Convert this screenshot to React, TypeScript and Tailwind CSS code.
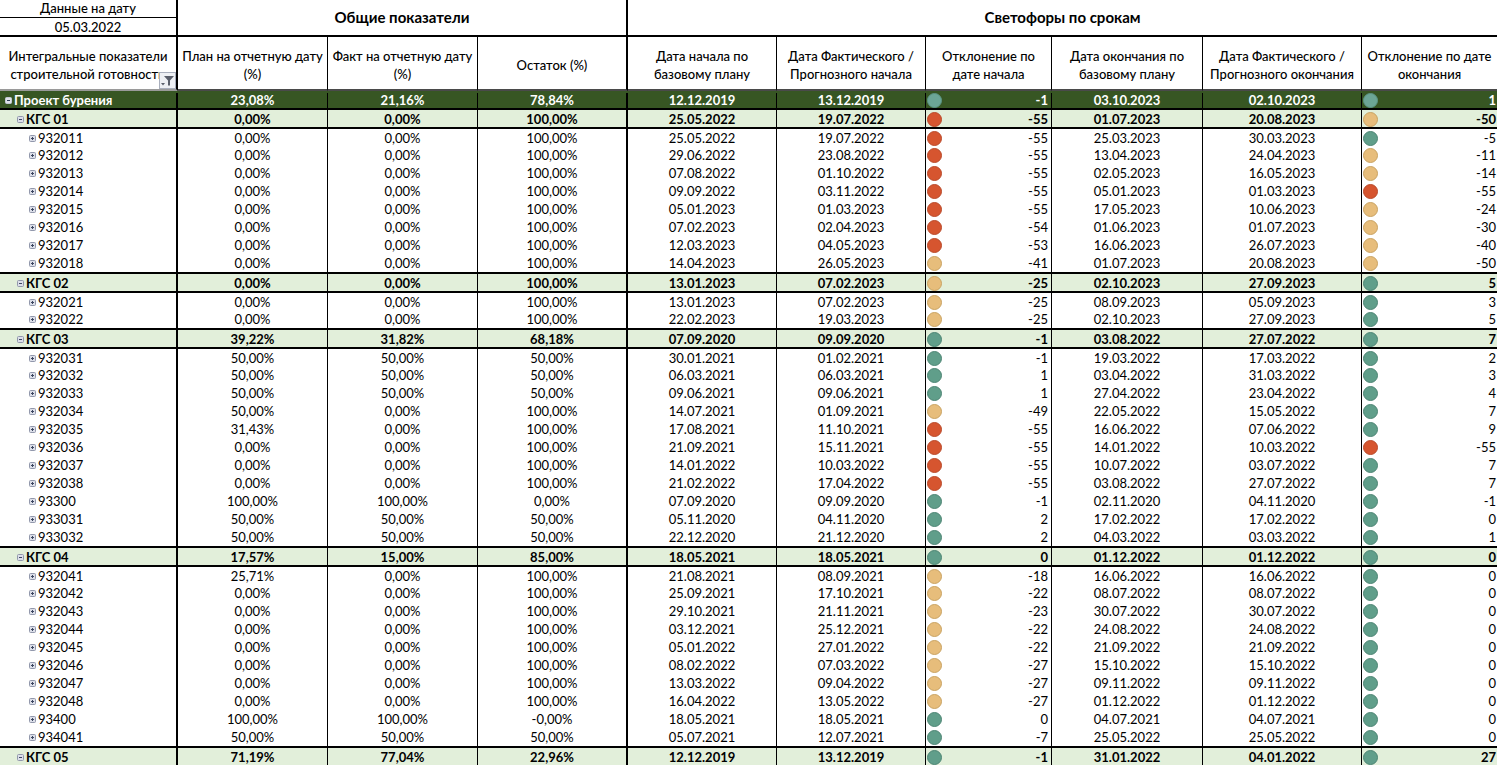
const COLS = "grid grid-cols-[178px_150px_150px_150px_149px_149px_126px_151px_159px_135px]";

const raw = `0|Проект бурения|23,08%|21,16%|78,84%|12.12.2019|13.12.2019|g-1|03.10.2023|02.10.2023|g1
1|КГС 01|0,00%|0,00%|100,00%|25.05.2022|19.07.2022|r-55|01.07.2023|20.08.2023|y-50
2|932011|0,00%|0,00%|100,00%|25.05.2022|19.07.2022|r-55|25.03.2023|30.03.2023|g-5
2|932012|0,00%|0,00%|100,00%|29.06.2022|23.08.2022|r-55|13.04.2023|24.04.2023|y-11
2|932013|0,00%|0,00%|100,00%|07.08.2022|01.10.2022|r-55|02.05.2023|16.05.2023|y-14
2|932014|0,00%|0,00%|100,00%|09.09.2022|03.11.2022|r-55|05.01.2023|01.03.2023|r-55
2|932015|0,00%|0,00%|100,00%|05.01.2023|01.03.2023|r-55|17.05.2023|10.06.2023|y-24
2|932016|0,00%|0,00%|100,00%|07.02.2023|02.04.2023|r-54|01.06.2023|01.07.2023|y-30
2|932017|0,00%|0,00%|100,00%|12.03.2023|04.05.2023|r-53|16.06.2023|26.07.2023|y-40
2|932018|0,00%|0,00%|100,00%|14.04.2023|26.05.2023|y-41|01.07.2023|20.08.2023|y-50
1|КГС 02|0,00%|0,00%|100,00%|13.01.2023|07.02.2023|y-25|02.10.2023|27.09.2023|g5
2|932021|0,00%|0,00%|100,00%|13.01.2023|07.02.2023|y-25|08.09.2023|05.09.2023|g3
2|932022|0,00%|0,00%|100,00%|22.02.2023|19.03.2023|y-25|02.10.2023|27.09.2023|g5
1|КГС 03|39,22%|31,82%|68,18%|07.09.2020|09.09.2020|g-1|03.08.2022|27.07.2022|g7
2|932031|50,00%|50,00%|50,00%|30.01.2021|01.02.2021|g-1|19.03.2022|17.03.2022|g2
2|932032|50,00%|50,00%|50,00%|06.03.2021|06.03.2021|g1|03.04.2022|31.03.2022|g3
2|932033|50,00%|50,00%|50,00%|09.06.2021|09.06.2021|g1|27.04.2022|23.04.2022|g4
2|932034|50,00%|0,00%|100,00%|14.07.2021|01.09.2021|y-49|22.05.2022|15.05.2022|g7
2|932035|31,43%|0,00%|100,00%|17.08.2021|11.10.2021|r-55|16.06.2022|07.06.2022|g9
2|932036|0,00%|0,00%|100,00%|21.09.2021|15.11.2021|r-55|14.01.2022|10.03.2022|r-55
2|932037|0,00%|0,00%|100,00%|14.01.2022|10.03.2022|r-55|10.07.2022|03.07.2022|g7
2|932038|0,00%|0,00%|100,00%|21.02.2022|17.04.2022|r-55|03.08.2022|27.07.2022|g7
2|93300|100,00%|100,00%|0,00%|07.09.2020|09.09.2020|g-1|02.11.2020|04.11.2020|g-1
2|933031|50,00%|50,00%|50,00%|05.11.2020|04.11.2020|g2|17.02.2022|17.02.2022|g0
2|933032|50,00%|50,00%|50,00%|22.12.2020|21.12.2020|g2|04.03.2022|03.03.2022|g1
1|КГС 04|17,57%|15,00%|85,00%|18.05.2021|18.05.2021|g0|01.12.2022|01.12.2022|g0
2|932041|25,71%|0,00%|100,00%|21.08.2021|08.09.2021|y-18|16.06.2022|16.06.2022|g0
2|932042|0,00%|0,00%|100,00%|25.09.2021|17.10.2021|y-22|08.07.2022|08.07.2022|g0
2|932043|0,00%|0,00%|100,00%|29.10.2021|21.11.2021|y-23|30.07.2022|30.07.2022|g0
2|932044|0,00%|0,00%|100,00%|03.12.2021|25.12.2021|y-22|24.08.2022|24.08.2022|g0
2|932045|0,00%|0,00%|100,00%|05.01.2022|27.01.2022|y-22|21.09.2022|21.09.2022|g0
2|932046|0,00%|0,00%|100,00%|08.02.2022|07.03.2022|y-27|15.10.2022|15.10.2022|g0
2|932047|0,00%|0,00%|100,00%|13.03.2022|09.04.2022|y-27|09.11.2022|09.11.2022|g0
2|932048|0,00%|0,00%|100,00%|16.04.2022|13.05.2022|y-27|01.12.2022|01.12.2022|g0
2|93400|100,00%|100,00%|-0,00%|18.05.2021|18.05.2021|g0|04.07.2021|04.07.2021|g0
2|934041|50,00%|50,00%|50,00%|05.07.2021|12.07.2021|g-7|25.05.2022|25.05.2022|g0
1|КГС 05|71,19%|77,04%|22,96%|12.12.2019|13.12.2019|g-1|31.01.2022|04.01.2022|g27`;

const rows = raw.split("\n").map((l) => l.split("|"));

const heads = [
  "Интегральные показатели строительной готовности",
  "План на отчетную дату (%)",
  "Факт на отчетную дату (%)",
  "Остаток (%)",
  "Дата начала по базовому плану",
  "Дата Фактического / Прогнозного начала",
  "Отклонение по дате начала",
  "Дата окончания по базовому плану",
  "Дата Фактического / Прогнозного окончания",
  "Отклонение по дате окончания",
];

const rightBorder = [
  "border-r-2 border-r-black",
  "border-r border-r-black",
  "border-r border-r-black",
  "border-r-2 border-r-black",
  "border-r border-r-black",
  "border-r border-r-black",
  "border-r border-r-black",
  "border-r border-r-black",
  "border-r border-r-black",
  "",
];

function Box({ open, level }: { open: boolean; level: number }) {
  const dark = level === 0;
  return (
    <svg width="7" height="7" viewBox="0 0 7 7" className="shrink-0 mr-[2px]">
      <rect x="0.5" y="0.5" width="6" height="6" rx="1" fill={dark ? "#dfe2ea" : "#dcdfe9"} stroke={dark ? "#c3c8d4" : "#9298ac"} />
      <path d={open ? "M2 3.5H5" : "M2 3.5H5M3.5 2V5"} stroke={dark ? "#2d3b55" : "#3c4660"} strokeWidth="1" />
    </svg>
  );
}

function Light({ c, onDark }: { c: string; onDark: boolean }) {
  const fill = c === "g" ? (onDark ? "#6ca696" : "#609e8a") : c === "y" ? "#e7bd7b" : "#d6552f";
  const stroke = c === "g" ? (onDark ? "#5c9585" : "#4d8574") : c === "y" ? "#c9a362" : "#b94a2a";
  return (
    <svg width="15" height="15" viewBox="0 0 15 15" className="shrink-0 ml-[1px]">
      <circle cx="7.5" cy="7.5" r="7" fill={fill} stroke={stroke} strokeWidth="1" />
    </svg>
  );
}

function Filter() {
  return (
    <div className="absolute right-0 bottom-0 w-[17px] h-[17px] bg-[#eef0f4] border border-[#a9afbd] flex items-center justify-center">
      <svg width="15" height="13" viewBox="0 0 15 13">
        <path d="M4 2H14L10 6.5V11.5H8V6.5Z" fill="#5a5f6b" />
        <path d="M1 9H5L3 11.5Z" fill="#5a5f6b" />
      </svg>
    </div>
  );
}

function Row({ r, prev }: { r: string[]; prev: number }) {
  const level = Number(r[0]);
  const hasLine = level === 1 || prev < 2;
  const color =
    level === 0
      ? "bg-[#375623] text-white font-bold"
      : level === 1
        ? "bg-[#e2efda] text-black font-bold"
        : "bg-white text-black";
  const box =
    level === 0
      ? "h-[17px] pt-[2px]"
      : hasLine
        ? "h-[19.05px] border-t-2 border-t-black"
        : "h-[18px]";
  const nudge = level === 0 ? "" : "pt-[1px]";
  const center = `flex items-center justify-center overflow-hidden ${nudge}`;
  const devCell = (v: string, pr: string) => (
    <div className={`flex items-center justify-between ${pr} ${nudge} h-full`}>
      <Light c={v[0]} onDark={level === 0} />
      <span>{v.slice(1)}</span>
    </div>
  );
  const indent = level === 0 ? "pl-[5px]" : level === 1 ? "pl-[17px]" : "pl-[29px]";
  return (
    <div className={`${COLS} ${box} ${color} text-[13px] leading-none`}>
      <div className={`${rightBorder[0]} ${indent} ${nudge} flex items-center overflow-hidden whitespace-nowrap`}>
        <Box open={level < 2} level={level} />
        <span>{r[1]}</span>
      </div>
      {[2, 3, 4, 5, 6].map((k, i) => (
        <div key={k} className={`${rightBorder[i + 1]} ${center}`}>{r[k]}</div>
      ))}
      <div className={rightBorder[6]}>{devCell(r[7], "pr-[3px]")}</div>
      <div className={`${rightBorder[7]} ${center}`}>{r[8]}</div>
      <div className={`${rightBorder[8]} ${center}`}>{r[9]}</div>
      <div>{devCell(r[10], "pr-[1px]")}</div>
    </div>
  );
}

export default function App() {
  return (
    <div className="w-[1497px] h-[765px] overflow-hidden bg-white text-black font-['Lato','Liberation_Sans',sans-serif]">
      <div className="flex h-[37px] border-b-2 border-black text-[13px]">
        <div className="w-[178px] border-r-2 border-black flex flex-col font-medium">
          <div className="h-[18px] border-b border-black flex items-center justify-center">Данные на дату</div>
          <div className="flex-1 flex items-center justify-center">05.03.2022</div>
        </div>
        <div className="w-[450px] border-r-2 border-black flex items-center justify-center font-bold text-[15px]">Общие показатели</div>
        <div className="flex-1 flex items-center justify-center font-bold text-[15px]">Светофоры по срокам</div>
      </div>
      <div className={`${COLS} h-[54px] text-[13px] leading-[18px] font-medium`}>
        {heads.map((h, i) => (
          <div
            key={h}
            className={`${rightBorder[i]} border-b-2 ${i === 0 ? "border-b-[#9a9a9a]" : "border-b-[#4a4a4a]"} relative flex items-center justify-center text-center px-[2px] pt-[3px]`}
          >
            <span className={i === 0 ? "block whitespace-nowrap overflow-hidden" : ""}>
              {i === 0 ? (
                <>
                  Интегральные показатели
                  <br />
                  строительной готовности
                </>
              ) : (
                h
              )}
            </span>
            {i === 0 && <Filter />}
          </div>
        ))}
      </div>
      {rows.map((r, i) => (
        <Row key={i} r={r} prev={i === 0 ? 2 : Number(rows[i - 1][0])} />
      ))}
    </div>
  );
}
